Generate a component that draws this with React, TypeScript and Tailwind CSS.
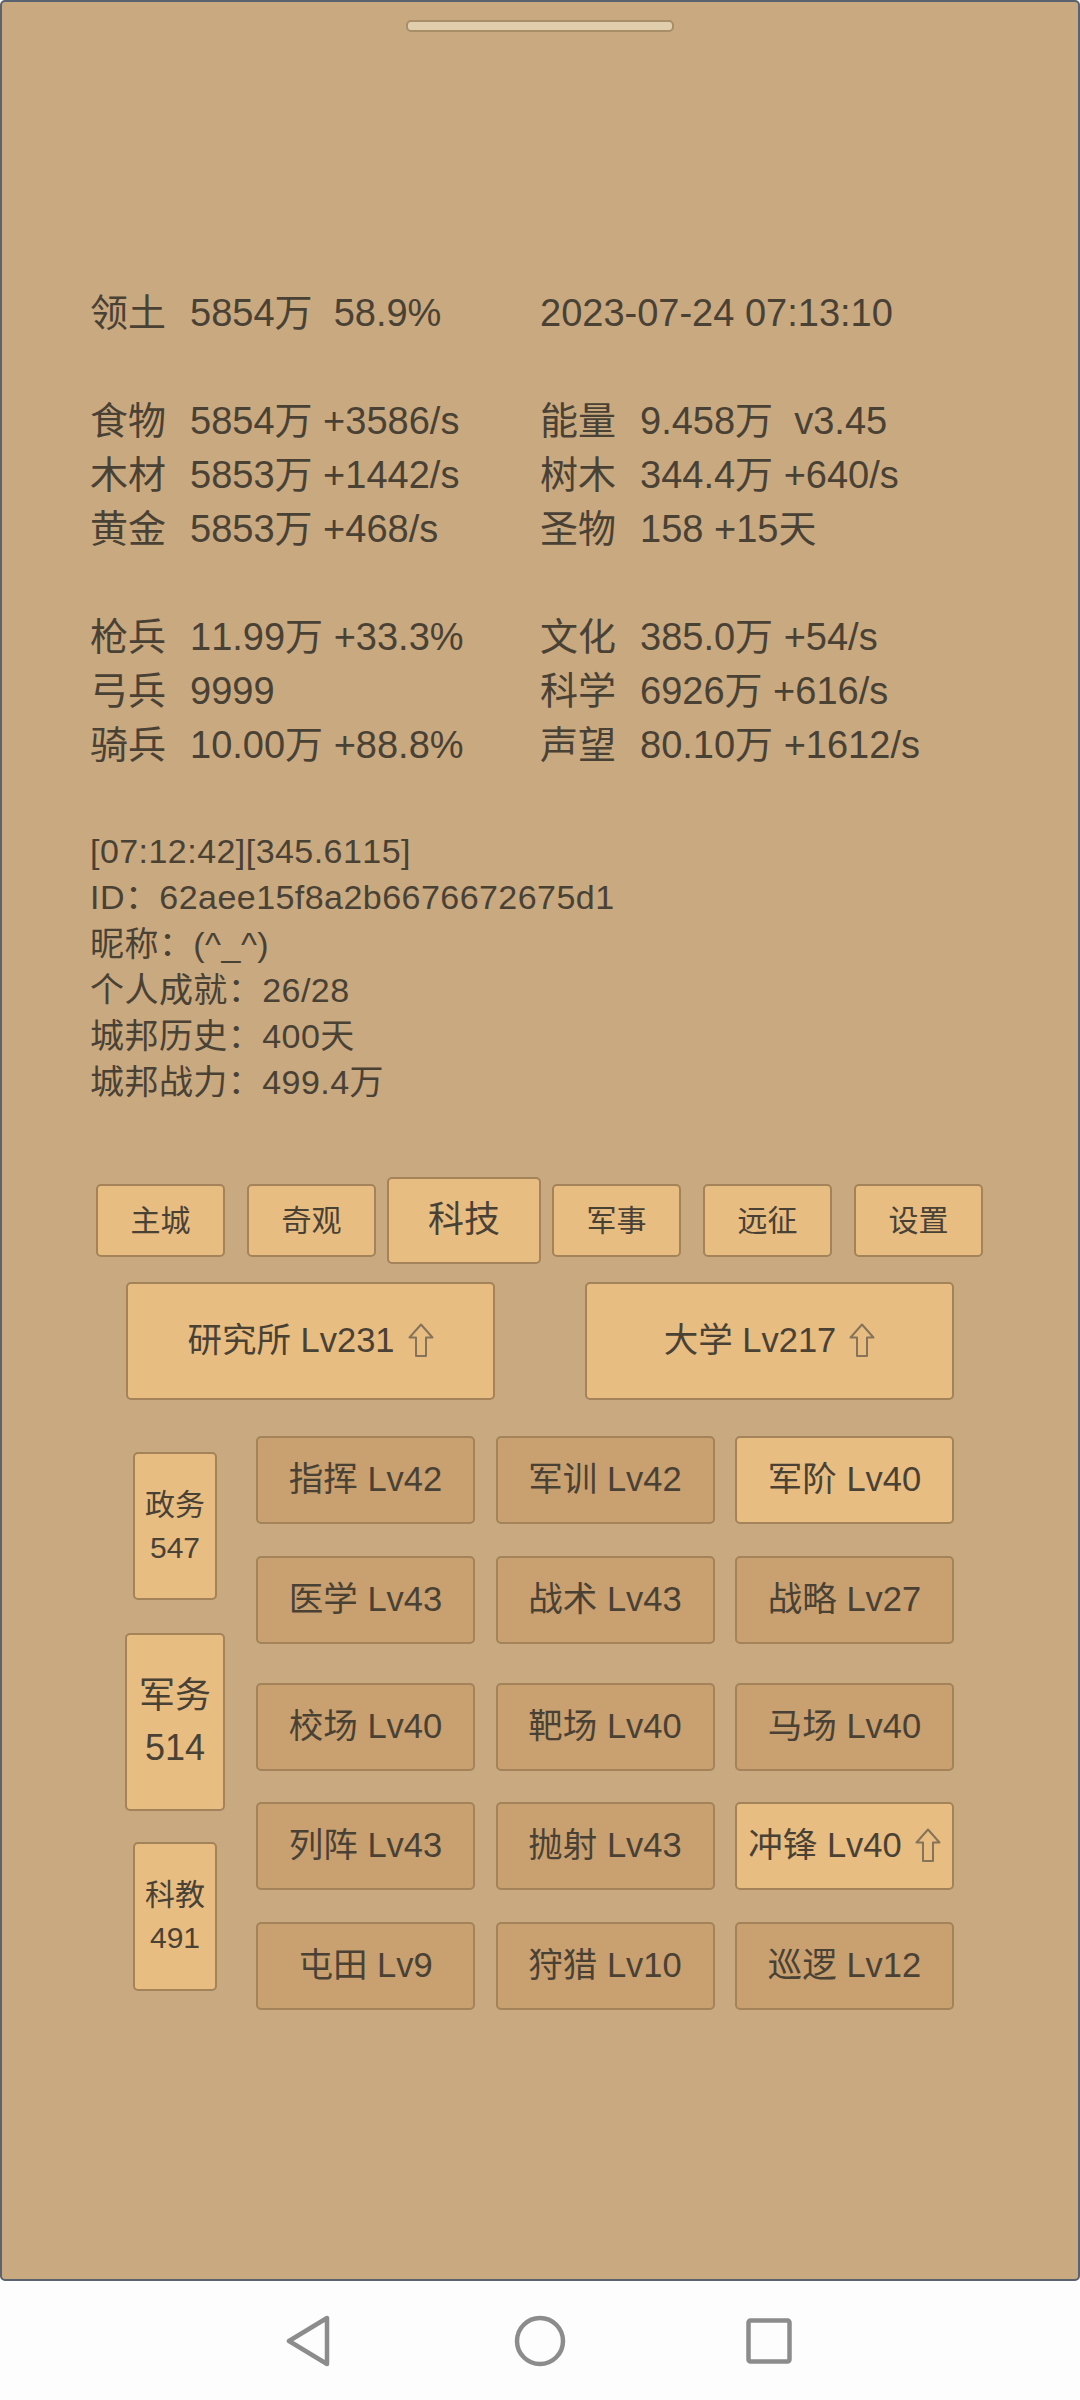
import React from "react";

const font = { fontFamily: '"Liberation Sans", "Noto Sans CJK SC", sans-serif' };

const statGroups = [
  [
    ["领土", "5854万  58.9%", "", "2023-07-24 07:13:10"],
  ],
  [
    ["食物", "5854万 +3586/s", "能量", "9.458万  v3.45"],
    ["木材", "5853万 +1442/s", "树木", "344.4万 +640/s"],
    ["黄金", "5853万 +468/s", "圣物", "158 +15天"],
  ],
  [
    ["枪兵", "11.99万 +33.3%", "文化", "385.0万 +54/s"],
    ["弓兵", "9999", "科学", "6926万 +616/s"],
    ["骑兵", "10.00万 +88.8%", "声望", "80.10万 +1612/s"],
  ],
];

const logLines = [
  "[07:12:42][345.6115]",
  "ID：62aee15f8a2b6676672675d1",
  "昵称：(^_^)",
  "个人成就：26/28",
  "城邦历史：400天",
  "城邦战力：499.4万",
];

const techRows = [
  { mt: "mt-0", items: [["指挥 Lv42", false, false], ["军训 Lv42", false, false], ["军阶 Lv40", true, false]] },
  { mt: "mt-[32px]", items: [["医学 Lv43", false, false], ["战术 Lv43", false, false], ["战略 Lv27", false, false]] },
  { mt: "mt-[39px]", items: [["校场 Lv40", false, false], ["靶场 Lv40", false, false], ["马场 Lv40", false, false]] },
  { mt: "mt-[31px]", items: [["列阵 Lv43", false, false], ["抛射 Lv43", false, false], ["冲锋 Lv40", true, true]] },
  { mt: "mt-[32px]", items: [["屯田 Lv9", false, false], ["狩猎 Lv10", false, false], ["巡逻 Lv12", false, false]] },
] as { mt: string; items: [string, boolean, boolean][] }[];

function UpArrow() {
  return (
    <svg width="26" height="35" viewBox="0 0 26 35" className="ml-[13px] shrink-0">
      <path d="M13 1.5 L24.5 14.5 H18 V33 H8 V14.5 H1.5 Z" fill="none" stroke="#85735a" strokeWidth="2" strokeLinejoin="round" />
    </svg>
  );
}

function Tab({ label, active }: { label: string; active?: boolean }) {
  if (active) {
    return (
      <div className="flex h-[87px] w-[154px] items-center justify-center rounded-[5px] border-2 border-[#a5835a] bg-[#e8bd82] text-[36px] text-[#4a4135]">
        {label}
      </div>
    );
  }
  return (
    <div className="mx-[11px] flex h-[73px] w-[129px] items-center justify-center rounded-[5px] border-2 border-[#a5835a] bg-[#e8bd82] text-[30px] text-[#4a4135]">
      {label}
    </div>
  );
}

function TechButton({ label, lit, up }: { label: string; lit: boolean; up: boolean }) {
  return (
    <div
      className={
        lit
          ? "flex h-[88px] w-[219px] items-center justify-center rounded-[5px] border-2 border-[#a5835a] bg-[#e8bd82] text-[34.5px] text-[#4a4135]"
          : "flex h-[88px] w-[219px] items-center justify-center rounded-[5px] border-2 border-[#a5835a] bg-[#c9a06f] text-[34.5px] text-[#4a4135]"
      }
    >
      <span>{label}</span>
      {up && <UpArrow />}
    </div>
  );
}

export default function App() {
  return (
    <div className="flex h-[2400px] w-[1080px] flex-col overflow-hidden bg-[#fdfdfd] [font-kerning:none]" style={font}>
      <div className="h-[2281px] rounded-[5px] border-2 border-[#5a6270] bg-[#c9a980]">
        {/* handle */}
        <div className="mx-auto mt-[18px] h-[12px] w-[268px] rounded-[5px] border-2 border-[#a88e69] bg-[#e0ceac]" />

        {/* stats */}
        <div className="mt-[254px] pl-[88px] text-[38px] leading-[54px] text-[#4a4135]">
          {statGroups.map((group, i) => (
            <div key={i} className={i > 0 ? "mt-[54px]" : ""}>
              {group.map((row) => (
                <div key={row[0]} className="flex h-[54px] whitespace-pre">
                  <div className="flex w-[450px]">
                    <span className="w-[100px]">{row[0]}</span>
                    <span>{row[1]}</span>
                  </div>
                  <div className="flex">
                    {row[2] ? <span className="w-[100px]">{row[2]}</span> : null}
                    <span>{row[3]}</span>
                  </div>
                </div>
              ))}
            </div>
          ))}
        </div>

        {/* log */}
        <div className="mt-[56px] pl-[88px] text-[34px] leading-[46.3px] tracking-[0.45px] text-[#4a4135]">
          {logLines.map((line) => (
            <div key={line}>{line}</div>
          ))}
        </div>

        {/* tabs */}
        <div className="mt-[71px] flex items-center pl-[83px]">
          <Tab label="主城" />
          <Tab label="奇观" />
          <Tab label="科技" active />
          <Tab label="军事" />
          <Tab label="远征" />
          <Tab label="设置" />
        </div>

        {/* buildings */}
        <div className="mt-[18px] flex gap-[90px] pl-[124px]">
          <div className="flex h-[118px] w-[369px] items-center justify-center rounded-[5px] border-2 border-[#a5835a] bg-[#e8bd82] text-[34.5px] text-[#4a4135]">
            <span>研究所 Lv231</span>
            <UpArrow />
          </div>
          <div className="flex h-[118px] w-[369px] items-center justify-center rounded-[5px] border-2 border-[#a5835a] bg-[#e8bd82] text-[34.5px] text-[#4a4135]">
            <span>大学 Lv217</span>
            <UpArrow />
          </div>
        </div>

        {/* policy column and tech grid */}
        <div className="mt-[36px] flex pl-[123px]">
          <div className="flex w-[100px] flex-col items-center text-[#4a4135]">
            <div className="mt-[16px] flex h-[148px] w-[84px] flex-col items-center justify-center rounded-[5px] border-2 border-[#a5835a] bg-[#e8bd82] text-[30px] leading-[43px]">
              <span>政务</span>
              <span>547</span>
            </div>
            <div className="mt-[33px] flex h-[178px] w-[100px] flex-col items-center justify-center rounded-[5px] border-2 border-[#a5835a] bg-[#e8bd82] text-[36px] leading-[52px]">
              <span>军务</span>
              <span>514</span>
            </div>
            <div className="mt-[31px] flex h-[149px] w-[84px] flex-col items-center justify-center rounded-[5px] border-2 border-[#a5835a] bg-[#e8bd82] text-[30px] leading-[43px]">
              <span>科教</span>
              <span>491</span>
            </div>
          </div>

          <div className="ml-[31px]">
            {techRows.map((row) => (
              <div key={row.items[0][0]} className={`flex gap-[20.5px] ${row.mt}`}>
                {row.items.map(([label, lit, up]) => (
                  <TechButton key={label} label={label} lit={lit} up={up} />
                ))}
              </div>
            ))}
          </div>
        </div>
      </div>

      {/* android nav bar */}
      <div className="flex flex-1 items-start pl-[286px] pt-[34px]">
        <svg width="44" height="52" viewBox="0 0 44 52">
          <path d="M41 3 V49 L3 26 Z" fill="none" stroke="#8c8c8c" strokeWidth="4.5" strokeLinejoin="round" />
        </svg>
        <svg width="52" height="52" viewBox="0 0 52 52" className="ml-[184px]">
          <circle cx="26" cy="26" r="23" fill="none" stroke="#8c8c8c" strokeWidth="4.5" />
        </svg>
        <svg width="46" height="46" viewBox="0 0 46 46" className="ml-[180px] mt-[3px]">
          <rect x="2.5" y="2.5" width="41" height="41" rx="2" fill="none" stroke="#8c8c8c" strokeWidth="4.5" />
        </svg>
      </div>
    </div>
  );
}
